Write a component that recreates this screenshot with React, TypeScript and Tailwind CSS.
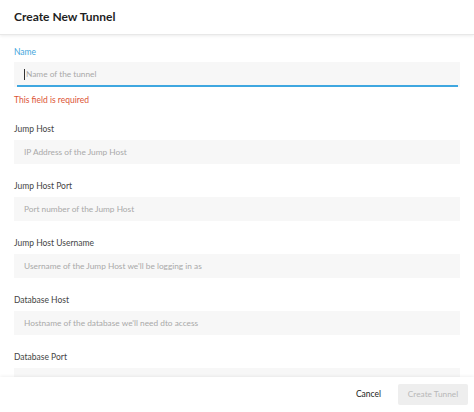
const fields = [
  { label: "Jump Host", placeholder: "IP Address of the Jump Host" },
  { label: "Jump Host Port", placeholder: "Port number of the Jump Host" },
  { label: "Jump Host Username", placeholder: "Username of the Jump Host we'll be logging in as" },
  { label: "Database Host", placeholder: "Hostname of the database we'll need dto access" },
  { label: "Database Port", placeholder: "Port number of the database we'll need to access" },
]

export default function App() {
  return (
    <div className="w-[474px] h-[412px] bg-white flex flex-col overflow-hidden font-['Lato','Liberation_Sans',sans-serif]">
      <div className="h-[35px] shrink-0 flex items-center px-[14px] border-b border-[#e8e8e8] shadow-[0_1px_3px_rgba(0,0,0,0.08)] relative z-10">
        <h1 className="text-[12px] font-bold text-[#1f1f1f]">Create New Tunnel</h1>
      </div>

      <div className="flex-1 overflow-hidden px-[14px] pt-[11px]">
        <label className="block h-[12px] leading-[12px] text-[8.5px] text-[#45a6dc] mb-[4px]">Name</label>
        <div className="relative h-[25px] bg-[#f7f7f7] flex items-center pl-[10px]">
          <span className="w-px h-[11px] bg-[#333] mr-px"></span>
          <span className="text-[8.3px] text-[#a9a9a9]">Name of the tunnel</span>
          <div className="absolute bottom-0 left-[3px] right-[2px] h-[2px] bg-[#3fa7e0]"></div>
        </div>
        <div className="h-[12px] leading-[12px] text-[8.5px] text-[#dc5435] mt-[7px] mb-[17px]">This field is required</div>

        {fields.map((f) => (
          <div key={f.label} className="mb-[16px]">
            <label className="block h-[12px] leading-[12px] text-[8.5px] text-[#444] mb-[5px]">{f.label}</label>
            <div className="h-[24px] bg-[#f7f7f7] flex items-center pl-[10px]">
              <span className="text-[8.3px] text-[#a9a9a9]">{f.placeholder}</span>
            </div>
          </div>
        ))}
      </div>

      <div className="h-[35px] shrink-0 flex items-center justify-end gap-[15px] pr-[6px] bg-white shadow-[0_-1px_3px_rgba(0,0,0,0.06)] relative z-10">
        <button className="text-[8.5px] text-[#222] px-[2px]">Cancel</button>
        <button className="h-[21px] w-[70px] bg-[#eeeeee] rounded-[2px] text-[8.3px] text-[#b8b8b8]">Create Tunnel</button>
      </div>
    </div>
  )
}
